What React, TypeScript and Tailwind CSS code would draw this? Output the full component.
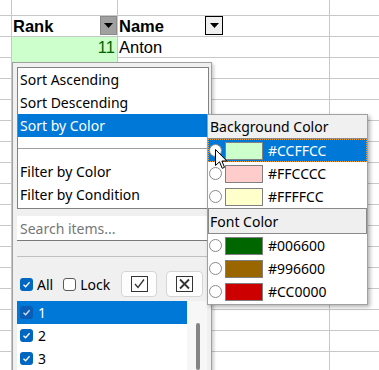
import React from "react";

const sheetRows = Array.from({ length: 16 });

const CheckMark = ({ color = "white" }: { color?: string }) => (
  <svg width="9" height="9" viewBox="0 0 9 9">
    <path d="M1.5 4.8 L3.6 6.8 L7.6 2.2" fill="none" stroke={color} strokeWidth="1.3" />
  </svg>
);

const BlueBox = ({ dark = false }: { dark?: boolean }) => (
  <div
    className={
      dark
        ? "w-[13px] h-[13px] rounded-[3px] bg-[#0a5cb4] flex items-center justify-center"
        : "w-[13px] h-[13px] rounded-[3px] bg-[#0067c0] flex items-center justify-center"
    }
  >
    <CheckMark color={dark ? "#cfe3f7" : "white"} />
  </div>
);

const Radio = () => (
  <div className="w-[13px] h-[13px] rounded-full border border-[#8a8a8a] bg-white shrink-0" />
);

const ColorRow = ({ swatch, label }: { swatch: string; label: string }) => (
  <div className="h-[23px] flex items-center pl-[1px]">
    <Radio />
    <div className="ml-[3px] w-[38px] h-[18px] border border-[#808080]" style={{ background: swatch }} />
    <span className="ml-[5px]">{label}</span>
  </div>
);

const SheetCell = ({ children, className = "" }: { children?: React.ReactNode; className?: string }) => (
  <div className={"h-full border-r border-[#c8c8c8] " + className}>{children}</div>
);

const DropButton = ({ pressed = false }: { pressed?: boolean }) => (
  <div
    className={
      pressed
        ? "w-[17px] h-[19px] bg-[#a0a0a0] border border-[#8a8a8a] flex items-center justify-center"
        : "w-[18px] h-[19px] bg-[#f0f0f0] border border-black flex items-center justify-center"
    }
  >
    <svg width="9" height="5" viewBox="0 0 9 5">
      <path d="M0 0 H9 L4.5 5 Z" fill="black" />
    </svg>
  </div>
);

export default function App() {
  return (
    <div className="relative w-[379px] h-[370px] overflow-hidden bg-white font-['Liberation_Sans',Arial,sans-serif] text-[16.5px] text-black">
      {/* spreadsheet */}
      <div className="flex flex-col">
        <div className="flex h-[16px] border-b border-[#c8c8c8]">
          <SheetCell className="w-[12px]" />
          <SheetCell className="w-[106px]" />
          <SheetCell className="w-[212px]" />
          <div className="flex-1" />
        </div>
        <div className="flex h-[21px] border-b border-[#c8c8c8] leading-[20px]">
          <SheetCell className="w-[12px]" />
          <SheetCell className="w-[106px] flex items-start justify-between pl-[1px]">
            <span className="font-bold">Rank</span>
            <DropButton pressed />
          </SheetCell>
          <SheetCell className="w-[212px] flex items-start pl-[1px]">
            <span className="font-bold w-[86px]">Name</span>
            <DropButton />
          </SheetCell>
          <div className="flex-1" />
        </div>
        <div className="flex h-[21px] border-b border-[#c8c8c8] leading-[20px]">
          <SheetCell className="w-[12px]" />
          <div className="w-[106px] h-[21px] -mb-px bg-[#ccffcc] border-r border-[#c8c8c8] text-right pr-[2px] text-[#006600]">11</div>
          <SheetCell className="w-[212px] pl-[1px]">Anton</SheetCell>
          <div className="flex-1" />
        </div>
        {sheetRows.map((_, i) => (
          <div key={i} className="flex h-[21px] border-b border-[#c8c8c8]">
            <SheetCell className="w-[12px]" />
            <SheetCell className={i === 0 ? "w-[106px] bg-[#ccffcc]" : "w-[106px]"} />
            <SheetCell className="w-[212px]" />
            <div className="flex-1" />
          </div>
        ))}
      </div>

      {/* autofilter popup */}
      <div className="absolute left-[12px] top-[62px] w-[200px] h-[320px] bg-[#f0f0f0] border border-[#a0a0a0] pl-[4px] pr-[2px] pt-[4px] shadow-[2px_2px_3px_rgba(0,0,0,0.2)] font-['Noto_Sans',sans-serif] text-[14px] text-black">
        <div className="h-[142px] bg-white border border-[#828282]">
          <div className="h-[23px] flex items-center pl-[2px]">Sort Ascending</div>
          <div className="h-[23px] flex items-center pl-[2px]">Sort Descending</div>
          <div className="h-[23px] flex items-center pl-[2px] bg-[#0078d7] text-white">Sort by Color</div>
          <div className="h-[23px] flex items-center">
            <div className="h-px w-full bg-[#a0a0a0]" />
          </div>
          <div className="h-[23px] flex items-center pl-[2px]">Filter by Color</div>
          <div className="h-[23px] flex items-center pl-[2px]">Filter by Condition</div>
        </div>

        <div className="mt-[7px] h-[25px] bg-white border-b border-[#7a7a7a] flex items-center pl-[3px] text-[#767676]">
          Search items...
        </div>

        <div className="mt-[15px] h-px bg-[#c0c0c0]" />

        <div className="mt-[14px] h-[26px] flex items-center">
          <div className="ml-[3px]">
            <BlueBox />
          </div>
          <span className="ml-[4px]">All</span>
          <div className="ml-[10px] w-[13px] h-[13px] rounded-[3px] border border-[#5a5a5a] bg-white" />
          <span className="ml-[4px]">Lock</span>
          <div className="ml-[11px] w-[36px] h-[26px] rounded-[4px] border border-[#d5d5d5] bg-[#fdfdfd] flex items-center justify-center">
            <svg width="17" height="16" viewBox="0 0 17 16">
              <rect x="0.5" y="0.5" width="16" height="15" fill="none" stroke="#333" strokeWidth="1" />
              <path d="M4 8 L7 11.5 L13 3.5" fill="none" stroke="#333" strokeWidth="1.3" />
            </svg>
          </div>
          <div className="ml-[9px] w-[37px] h-[26px] rounded-[4px] border border-[#d5d5d5] bg-[#fdfdfd] flex items-center justify-center">
            <svg width="17" height="16" viewBox="0 0 17 16">
              <rect x="0.5" y="0.5" width="16" height="15" fill="none" stroke="#333" strokeWidth="1" />
              <path d="M4 3.5 L13 12.5 M13 3.5 L4 12.5" fill="none" stroke="#333" strokeWidth="1.8" />
            </svg>
          </div>
        </div>

        <div className="mt-[4px] flex">
          <div className="w-[170px] bg-white">
            <div className="h-[23px] flex items-center pl-[3px] bg-[#0078d7] text-white">
              <BlueBox dark />
              <span className="ml-[5px]">1</span>
            </div>
            <div className="h-[23px] flex items-center pl-[3px]">
              <BlueBox />
              <span className="ml-[5px]">2</span>
            </div>
            <div className="h-[23px] flex items-center pl-[3px]">
              <BlueBox />
              <span className="ml-[5px]">3</span>
            </div>
          </div>
          <div className="w-[20px] h-[69px] bg-[#f7f7f7] flex justify-center pt-[22px] pl-[1px]">
            <div className="w-[4px] h-full bg-[#858585] rounded-[2px]" />
          </div>
        </div>
      </div>

      {/* color submenu */}
      <div className="absolute left-[207px] top-[114px] w-[161px] h-[191px] bg-white border border-[#a0a0a0] shadow-[2px_2px_4px_rgba(0,0,0,0.3)] font-['Noto_Sans',sans-serif] text-[14px] text-black">
        <div className="h-[24px] bg-[#f0f0f0] border-b border-[#8a8a8a] flex items-center pl-[2px]">
          Background Color
        </div>
        <div className="h-[23px] flex items-center bg-[#0078d7] text-white border border-dotted border-[#e8a040]">
          <Radio />
          <div className="ml-[3px] w-[38px] h-[18px] border border-[#808080] bg-[#ccffcc]" />
          <span className="ml-[5px]">#CCFFCC</span>
        </div>
        <ColorRow swatch="#ffcccc" label="#FFCCCC" />
        <ColorRow swatch="#ffffcc" label="#FFFFCC" />
        <div className="h-[26px] bg-[#efefef] border border-[#8a8a8a] flex items-center pl-[1px]">
          Font Color
        </div>
        <ColorRow swatch="#006600" label="#006600" />
        <ColorRow swatch="#996600" label="#996600" />
        <ColorRow swatch="#cc0000" label="#CC0000" />
      </div>

      {/* mouse pointer */}
      <svg className="absolute left-[215px] top-[149px]" width="13" height="21" viewBox="0 0 13 21">
        <path d="M0.5 0.5 L0.5 16.5 L4.5 12.8 L7.2 19.3 L9.5 18.3 L6.9 12 L11.8 12 Z" fill="white" stroke="black" strokeWidth="1" strokeLinejoin="round" />
      </svg>
    </div>
  );
}
